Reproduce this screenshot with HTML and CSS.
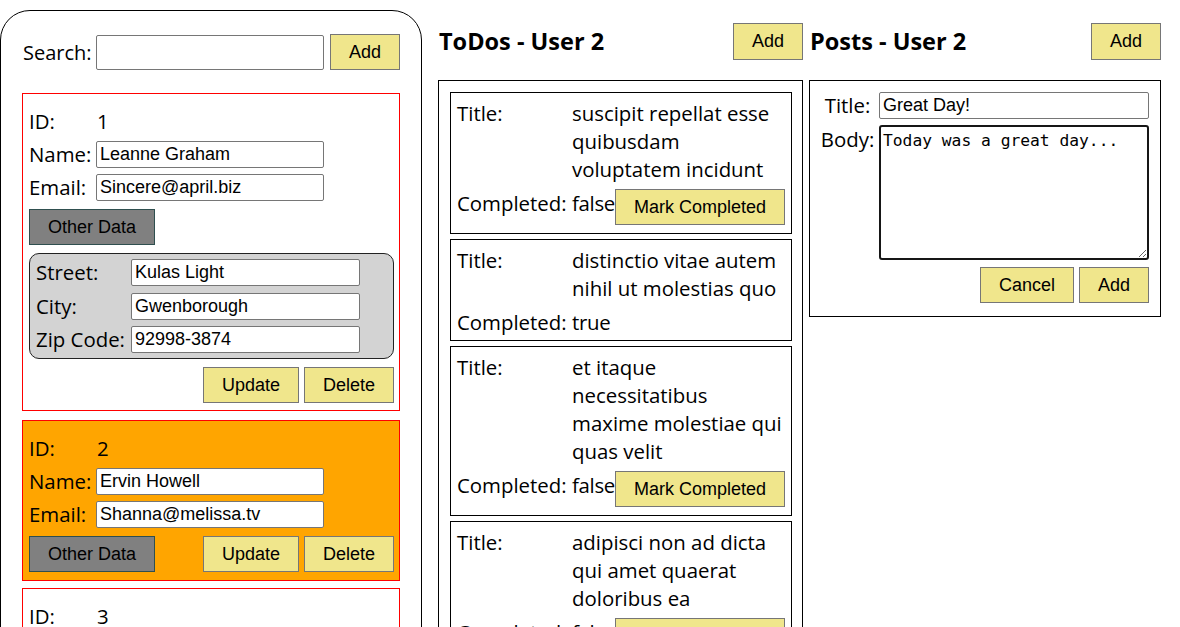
FILE: index.html
```html
<!DOCTYPE html>
<html lang="en">
<head>
<meta charset="utf-8">
<title>Users</title>
<link rel="stylesheet" href="styles.css">
</head>
<body>
<div class="app">
  <section class="users-panel">
    <div class="search-row">
      <label class="lbl search-lbl">Search:</label>
      <input class="field search-input" type="text">
      <button class="btn search-btn">Add</button>
    </div>

    <div class="user-card">
      <div class="fields">
        <span class="lbl">ID:</span><span class="lbl">1</span>
        <span class="lbl">Name:</span><input class="field" type="text" value="Leanne Graham">
        <span class="lbl">Email:</span><input class="field" type="text" value="Sincere@april.biz">
      </div>
      <div class="row-single"><button class="btn btn-gray">Other Data</button></div>
      <div class="address">
        <span class="lbl">Street:</span><input class="field" type="text" value="Kulas Light">
        <span class="lbl">City:</span><input class="field" type="text" value="Gwenborough">
        <span class="lbl">Zip Code:</span><input class="field" type="text" value="92998-3874">
      </div>
      <div class="card-actions">
        <button class="btn">Update</button>
        <button class="btn">Delete</button>
      </div>
    </div>

    <div class="user-card selected">
      <div class="fields">
        <span class="lbl">ID:</span><span class="lbl">2</span>
        <span class="lbl">Name:</span><input class="field" type="text" value="Ervin Howell">
        <span class="lbl">Email:</span><input class="field" type="text" value="Shanna@melissa.tv">
      </div>
      <div class="card-actions split">
        <button class="btn btn-gray">Other Data</button>
        <div class="action-pair">
          <button class="btn">Update</button>
          <button class="btn">Delete</button>
        </div>
      </div>
    </div>

    <div class="user-card">
      <div class="fields">
        <span class="lbl">ID:</span><span class="lbl">3</span>
        <span class="lbl">Name:</span><input class="field" type="text" value="Clementine Bauch">
        <span class="lbl">Email:</span><input class="field" type="text" value="Nathan@yesenia.net">
      </div>
      <div class="card-actions split">
        <button class="btn btn-gray">Other Data</button>
        <div class="action-pair">
          <button class="btn">Update</button>
          <button class="btn">Delete</button>
        </div>
      </div>
    </div>
  </section>

  <section class="todos-col">
    <div class="col-head">
      <h2 class="col-title">ToDos - User 2</h2>
      <button class="btn">Add</button>
    </div>
    <div class="list-box">
      <div class="todo">
        <span class="lbl">Title:</span><span class="lbl">suscipit repellat esse quibusdam voluptatem incidunt</span>
        <span class="lbl">Completed:</span><span class="done-cell"><span class="lbl">false</span><button class="btn mark-btn">Mark Completed</button></span>
      </div>
      <div class="todo">
        <span class="lbl">Title:</span><span class="lbl">distinctio vitae autem nihil ut molestias quo</span>
        <span class="lbl">Completed:</span><span class="done-cell"><span class="lbl">true</span></span>
      </div>
      <div class="todo">
        <span class="lbl">Title:</span><span class="lbl">et itaque necessitatibus maxime molestiae qui quas velit</span>
        <span class="lbl">Completed:</span><span class="done-cell"><span class="lbl">false</span><button class="btn mark-btn">Mark Completed</button></span>
      </div>
      <div class="todo">
        <span class="lbl">Title:</span><span class="lbl">adipisci non ad dicta qui amet quaerat doloribus ea</span>
        <span class="lbl">Completed:</span><span class="done-cell"><span class="lbl">false</span><button class="btn mark-btn">Mark Completed</button></span>
      </div>
    </div>
  </section>

  <section class="posts-col">
    <div class="col-head">
      <h2 class="col-title">Posts - User 2</h2>
      <button class="btn">Add</button>
    </div>
    <div class="post-box">
      <div class="post-form">
        <span class="lbl post-lbl title-lbl">Title:</span><input class="field" type="text" value="Great Day!">
        <span class="lbl post-lbl">Body:</span><textarea class="body-area">Today was a great day...</textarea>
      </div>
      <div class="post-actions">
        <button class="btn">Cancel</button>
        <button class="btn">Add</button>
      </div>
    </div>
  </section>
</div>
</body>
</html>
```

FILE: styles.css
```css
html, body {
  margin: 0;
  background: #ffffff;
  color: #000000;
}

body {
  font-family: "Open Sans", "Noto Sans", sans-serif;
}

.app {
  display: flex;
  align-items: flex-start;
  padding-top: 10px;
}

.lbl {
  font-size: 20.4px;
  line-height: 27px;
}

.field {
  box-sizing: border-box;
  height: 27px;
  border: 1px solid #767676;
  border-radius: 2px;
  padding: 0 3px;
  font-family: "Liberation Sans", Arial, sans-serif;
  font-size: 18px;
  color: #000;
  background: #fff;
}

.btn {
  box-sizing: border-box;
  height: 36px;
  padding: 0 18px;
  border: 1px solid #767676;
  background: #f0e68c;
  font-family: "Liberation Sans", Arial, sans-serif;
  font-size: 18px;
  color: #000;
  white-space: nowrap;
}

.btn-gray {
  background: #808080;
  border-color: #2f4f4f;
}

/* Users panel */
.users-panel {
  box-sizing: border-box;
  width: 422px;
  flex: none;
  border: 1px solid #000;
  border-radius: 30px 30px 0 0;
  padding: 23px 21px 40px 21px;
}

.search-row {
  display: flex;
  align-items: center;
  margin-bottom: 23px;
}

.search-lbl {
  flex: none;
  width: 73px;
  padding-left: 1px;
  font-size: 20px;
}

.search-input {
  flex: none;
  width: 228px;
  height: 35px;
}

.search-btn {
  flex: none;
  width: 70px;
  margin-left: 6px;
}

.user-card {
  border: 1px solid #ff0000;
  padding: 14px 5px 7px 6px;
  margin-bottom: 9px;
}

.user-card.selected {
  background: #ffa500;
  padding-bottom: 8px;
  margin-bottom: 7px;
}

.fields {
  display: grid;
  grid-template-columns: 67px 228px;
  grid-auto-rows: 27px;
  row-gap: 6px;
  align-items: center;
}

.fields .lbl:nth-child(2) {
  padding-left: 1px;
}

.row-single {
  margin-top: 8px;
  display: flex;
}

.address {
  margin-top: 8px;
  display: grid;
  grid-template-columns: 95px 229px;
  grid-auto-rows: 27px;
  row-gap: 6.5px;
  align-items: center;
  padding: 5px 6px;
  border: 1px solid #222;
  border-radius: 10px;
  background: #d3d3d3;
}

.card-actions {
  margin-top: 8px;
  display: flex;
  justify-content: flex-end;
  gap: 5px;
}

.card-actions.split {
  justify-content: space-between;
}

.action-pair {
  display: flex;
  gap: 5px;
}

/* Columns */
.todos-col {
  box-sizing: border-box;
  width: 365px;
  flex: none;
  margin-left: 16px;
}

.posts-col {
  box-sizing: border-box;
  width: 352px;
  flex: none;
  margin-left: 6px;
}

.col-head {
  display: flex;
  justify-content: space-between;
  align-items: center;
  padding-top: 13px;
  margin-bottom: 20px;
}

.col-head .btn {
  height: 37px;
}

.col-title {
  margin: 0;
  font-size: 23.5px;
  font-weight: 700;
  line-height: 37px;
  padding-left: 1px;
}

.list-box {
  border: 1px solid #000;
  padding: 11px 10px 11px 11px;
  display: flex;
  flex-direction: column;
  gap: 5px;
}

.todo {
  border: 1px solid #000;
  padding: 6px 6px 4px 6px;
  display: grid;
  grid-template-columns: 115px 1fr;
  row-gap: 6px;
  align-items: start;
}

.todo .lbl {
  line-height: 28px;
}

.done-cell {
  display: flex;
  align-items: flex-start;
}

.done-cell .lbl {
  letter-spacing: -0.3px;
}

.mark-btn {
  margin-bottom: 4px;
}

/* Posts */
.post-box {
  border: 1px solid #000;
  padding: 11px 11px 13px 6px;
}

.post-form {
  display: grid;
  grid-template-columns: 63px 270px;
  row-gap: 6px;
  align-items: start;
}

.post-lbl {
  text-align: center;
  line-height: 28px;
}

.title-lbl {
  line-height: 27px;
}

.body-area {
  box-sizing: border-box;
  width: 270px;
  height: 135px;
  margin: 0;
  padding: 2px;
  border: 2px solid #161616;
  border-radius: 3px;
  font-family: "DejaVu Sans Mono", "Liberation Mono", monospace;
  font-size: 16.3px;
  line-height: 24px;
  color: #000;
  background: #fff;
}

.post-actions {
  margin-top: 7px;
  display: flex;
  justify-content: flex-end;
  gap: 5px;
}
```
